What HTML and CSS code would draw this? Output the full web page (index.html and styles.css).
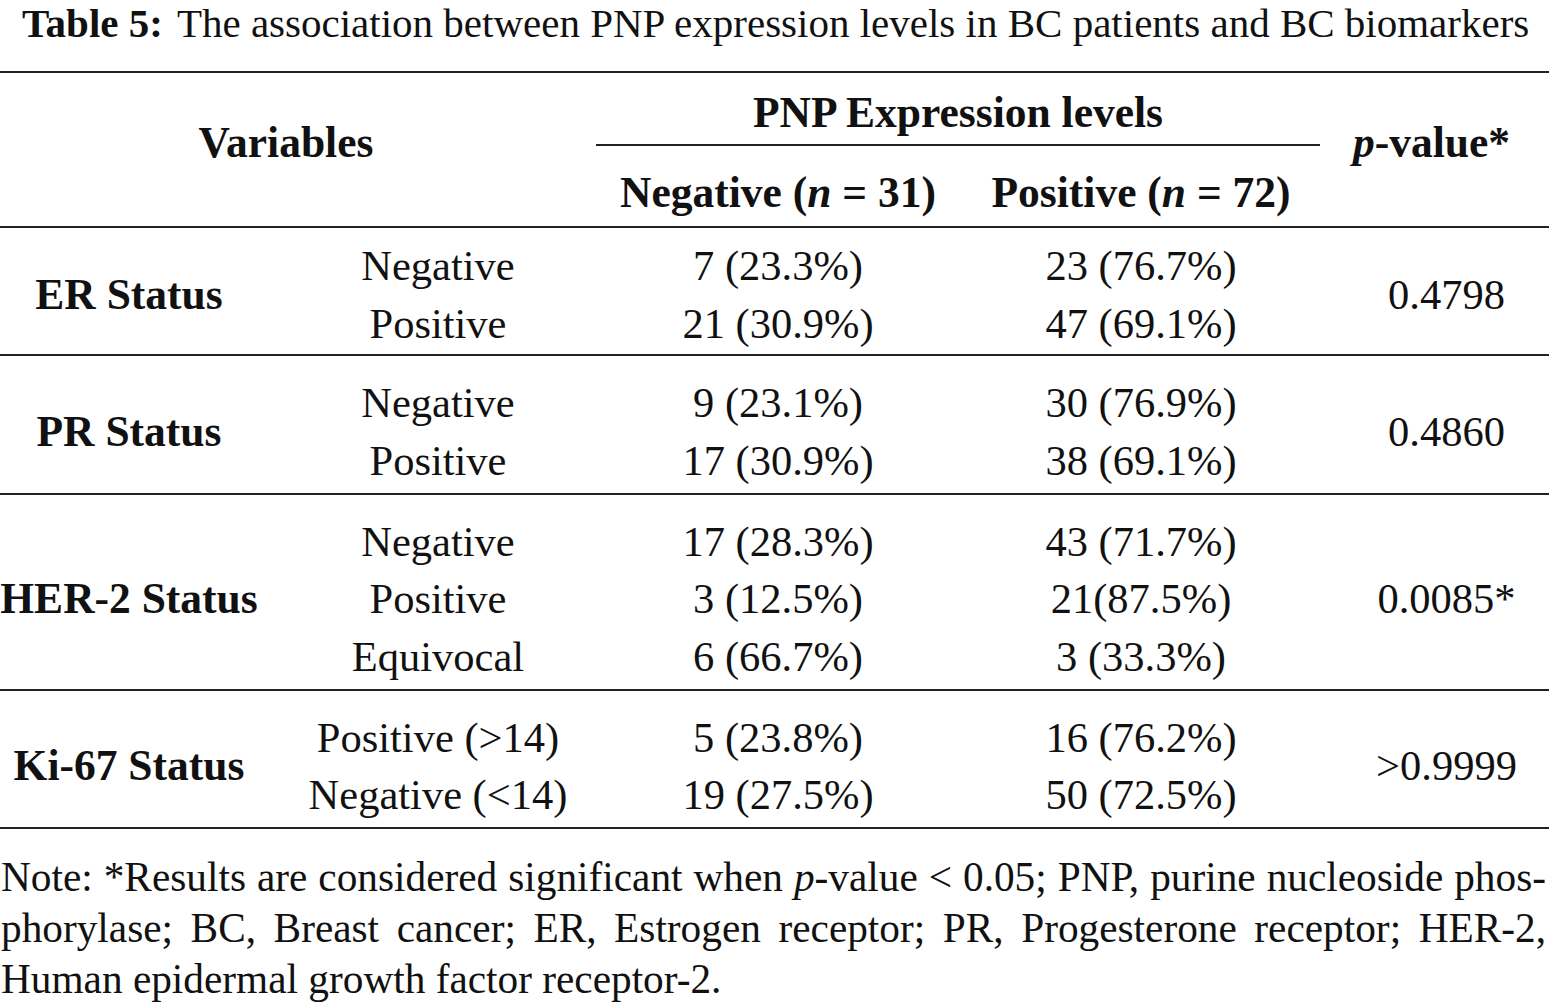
FILE: index.html
```html
<!DOCTYPE html>
<html lang="en">
<head>
<meta charset="utf-8">
<title>Table 5</title>
<link rel="stylesheet" href="styles.css">
</head>
<body>
<div class="page">
  <p class="caption"><b>Table 5:</b><span class="cap-gap"></span>The association between PNP expression levels in BC patients and BC biomarkers</p>
  <div class="table">
    <div class="thead">
      <div class="h-var">Variables</div>
      <div class="h-pnp">PNP Expression levels</div>
      <div class="h-neg">Negative (<i>n</i> = 31)</div>
      <div class="h-pos">Positive (<i>n</i> = 72)</div>
      <div class="h-p"><i>p</i>-value*</div>
    </div>
    <div class="group first">
      <div class="g-name">ER Status</div>
      <div class="stack"><span>Negative</span><span>Positive</span></div>
      <div class="stack"><span>7 (23.3%)</span><span>21 (30.9%)</span></div>
      <div class="stack"><span>23 (76.7%)</span><span>47 (69.1%)</span></div>
      <div class="g-p">0.4798</div>
    </div>
    <div class="group">
      <div class="g-name">PR Status</div>
      <div class="stack"><span>Negative</span><span>Positive</span></div>
      <div class="stack"><span>9 (23.1%)</span><span>17 (30.9%)</span></div>
      <div class="stack"><span>30 (76.9%)</span><span>38 (69.1%)</span></div>
      <div class="g-p">0.4860</div>
    </div>
    <div class="group">
      <div class="g-name">HER-2 Status</div>
      <div class="stack"><span>Negative</span><span>Positive</span><span>Equivocal</span></div>
      <div class="stack"><span>17 (28.3%)</span><span>3 (12.5%)</span><span>6 (66.7%)</span></div>
      <div class="stack"><span>43 (71.7%)</span><span>21(87.5%)</span><span>3 (33.3%)</span></div>
      <div class="g-p">0.0085*</div>
    </div>
    <div class="group">
      <div class="g-name">Ki-67 Status</div>
      <div class="stack"><span>Positive (&gt;14)</span><span>Negative (&lt;14)</span></div>
      <div class="stack"><span>5 (23.8%)</span><span>19 (27.5%)</span></div>
      <div class="stack"><span>16 (76.2%)</span><span>50 (72.5%)</span></div>
      <div class="g-p">&gt;0.9999</div>
    </div>
  </div>
  <div class="note">
    <span class="jl">Note: *Results are considered significant when <i>p</i>-value &lt; 0.05; PNP, purine nucleoside phos-</span>
    <span class="jl">phorylase; BC, Breast cancer; ER, Estrogen receptor; PR, Progesterone receptor; HER-2,</span>
    <span class="ll">Human epidermal growth factor receptor-2.</span>
  </div>
</div>
</body>
</html>
```

FILE: styles.css
```css
html, body {
  margin: 0;
  padding: 0;
  background: #ffffff;
}

body {
  color: #111111;
  font-family: "Liberation Serif", "Times New Roman", serif;
  font-size: 41px;
}

.page {
  width: 1549px;
}

.caption {
  margin: 0;
  height: 46px;
  line-height: 46px;
  padding-left: 22px;
  white-space: nowrap;
}

.cap-gap {
  display: inline-block;
  width: 14px;
}

.table {
  margin-top: 25px;
  border-top: 2px solid #222222;
  font-size: 42.5px;
}

.thead {
  display: grid;
  grid-template-columns: 258px 360px 320px 406px 1fr;
  grid-template-rows: 73px 80px;
  border-bottom: 2px solid #222222;
  font-weight: bold;
  font-size: 43.5px;
}

.h-var {
  grid-column: 1 / 3;
  grid-row: 1 / 3;
  align-self: center;
  text-align: center;
  line-height: 58px;
  padding-right: 46px;
  padding-bottom: 16px;
}

.h-pnp {
  grid-column: 3 / 5;
  grid-row: 1;
  align-self: end;
  text-align: center;
  line-height: 58px;
  padding-bottom: 3px;
  margin: 0 24px 0 -22px;
  border-bottom: 2px solid #222222;
  white-space: nowrap;
}

.h-neg,
.h-pos {
  grid-row: 2;
  text-align: center;
  line-height: 58px;
  padding-top: 17px;
  white-space: nowrap;
}

.h-neg { grid-column: 3; }
.h-pos { grid-column: 4; }

.h-p {
  grid-column: 5;
  grid-row: 1 / 3;
  align-self: center;
  text-align: center;
  line-height: 58px;
  padding-right: 30px;
  padding-bottom: 16px;
  white-space: nowrap;
}

.group {
  display: grid;
  grid-template-columns: 258px 360px 320px 406px 1fr;
  line-height: 57.5px;
  padding: 18px 0 3.5px;
  border-bottom: 2px solid #222222;
}

.group.first {
  padding: 9px 0 2px;
}

.stack {
  display: flex;
  flex-direction: column;
  align-items: center;
  white-space: nowrap;
}

.g-name {
  font-weight: bold;
  font-size: 43.5px;
  align-self: center;
  text-align: center;
  white-space: nowrap;
}

.g-p {
  align-self: center;
  text-align: center;
  white-space: nowrap;
}

.note {
  margin-top: 22.5px;
  padding-left: 1px;
  width: 1545px;
  line-height: 51px;
  font-size: 41.3px;
}

.note span {
  display: block;
}

.note .jl {
  text-align: justify;
  text-align-last: justify;
}

.note .ll {
  text-align: left;
}
```
